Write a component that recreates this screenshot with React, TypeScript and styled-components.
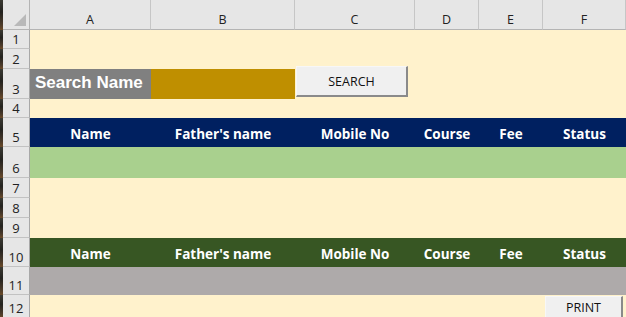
import React from "react";
import styled, { createGlobalStyle } from "styled-components";

const COLS = "3px 27px 121px 144px 120px 64px 64px 83px";

const Global = createGlobalStyle`
  html, body { margin: 0; padding: 0; background: #fff2cc; }
  body { width: 626px; height: 317px; overflow: hidden; }
`;

const Sheet = styled.div`
  width: 626px;
  height: 317px;
  overflow: hidden;
  display: flex;
  flex-direction: column;
  background: #fff2cc;
  font-family: "Open Sans", "Liberation Sans", sans-serif;
`;

const Row = styled.div<{ $h: number }>`
  display: grid;
  grid-template-columns: ${COLS};
  height: ${(p) => p.$h}px;
  flex: none;
  position: relative;
`;

const Strip = styled.div`
  background: linear-gradient(180deg, #3b3a33 0%, #24231f 40%, #4a3a2a 80%, #6b4a28 100%);
`;

const Corner = styled.div`
  background: #e6e6e6;
  border-right: 1px solid #b4b4b4;
  border-bottom: 1px solid #b4b4b4;
  display: flex;
  align-items: flex-end;
  justify-content: flex-end;
  padding: 0 3px 3px 0;
`;

const Triangle = styled.div`
  width: 0;
  height: 0;
  border-left: 12px solid transparent;
  border-bottom: 12px solid #b9b9b9;
`;

const ColHead = styled.div`
  background: #e6e6e6;
  border-right: 1px solid #c6c6c6;
  border-bottom: 1px solid #b4b4b4;
  display: flex;
  align-items: center;
  justify-content: center;
  padding-top: 9px;
  font-size: 12.5px;
  color: #222;
`;

const RowHead = styled.div`
  background: #e6e6e6;
  border-right: 1px solid #a8a8a8;
  border-bottom: 1px solid #c2c2c2;
  display: flex;
  align-items: flex-end;
  justify-content: center;
  font-size: 13px;
  line-height: 14px;
  padding-bottom: 2px;
  color: #222;
`;

const Cell = styled.div<{ $bg?: string; $span?: number }>`
  background: ${(p) => p.$bg ?? "#fff2cc"};
  grid-column: span ${(p) => p.$span ?? 1};
`;

const HeadCell = styled.div<{ $bg: string }>`
  background: ${(p) => p.$bg};
  display: flex;
  align-items: center;
  justify-content: center;
  padding-top: 3px;
  color: #fff;
  font-weight: 700;
  font-size: 13.5px;
  white-space: nowrap;
`;

const SearchLabel = styled.div`
  background: #808080;
  color: #fff;
  font-family: "Liberation Sans", Arial, sans-serif;
  font-weight: 700;
  font-size: 17px;
  display: flex;
  align-items: center;
  padding: 0 0 2px 5px;
  white-space: nowrap;
`;

const SearchInput = styled.div`
  background: #bf8f00;
`;

const ShapeButton = styled.div<{ $left: number; $top: number; $w: number; $h: number }>`
  position: absolute;
  left: ${(p) => p.$left}px;
  top: ${(p) => p.$top}px;
  width: ${(p) => p.$w}px;
  height: ${(p) => p.$h}px;
  box-sizing: border-box;
  background: #f0f0f0;
  border-top: 1px solid #f7f7f7;
  border-left: 1px solid #f7f7f7;
  border-right: 2px solid #8a8a8a;
  border-bottom: 2px solid #8a8a8a;
  display: flex;
  align-items: center;
  justify-content: center;
  font-size: 12.5px;
  color: #111;
`;

type RowDef = {
  n: number;
  h: number;
  kind?: "blank" | "fill" | "head" | "search" | "print";
  bg?: string;
};

const ROWS: RowDef[] = [
  { n: 1, h: 19 },
  { n: 2, h: 20 },
  { n: 3, h: 30, kind: "search" },
  { n: 4, h: 19 },
  { n: 5, h: 29, kind: "head", bg: "#002060" },
  { n: 6, h: 31, kind: "fill", bg: "#a9d08e" },
  { n: 7, h: 20 },
  { n: 8, h: 20 },
  { n: 9, h: 20 },
  { n: 10, h: 29, kind: "head", bg: "#375623" },
  { n: 11, h: 28, kind: "fill", bg: "#aeaaaa" },
  { n: 12, h: 23, kind: "print" },
];

const LETTERS = ["A", "B", "C", "D", "E", "F"];
const HEADINGS = ["Name", "Father's name", "Mobile No", "Course", "Fee", "Status"];

function RowBody({ r }: { r: RowDef }) {
  switch (r.kind) {
    case "head":
      return (
        <>
          {HEADINGS.map((t) => (
            <HeadCell key={t} $bg={r.bg!}>
              {t}
            </HeadCell>
          ))}
        </>
      );
    case "fill":
      return <Cell $bg={r.bg} $span={6} />;
    case "search":
      return (
        <>
          <SearchLabel>Search Name</SearchLabel>
          <SearchInput />
          <Cell $span={4} />
          <ShapeButton $left={296} $top={-3} $w={112} $h={31}>
            SEARCH
          </ShapeButton>
        </>
      );
    case "print":
      return (
        <>
          <Cell $span={6} />
          <ShapeButton $left={545} $top={1} $w={78} $h={23}>
            PRINT
          </ShapeButton>
        </>
      );
    default:
      return <Cell $span={6} />;
  }
}

export default function App() {
  return (
    <>
      <Global />
      <Sheet>
        <Row $h={30}>
          <Strip />
          <Corner>
            <Triangle />
          </Corner>
          {LETTERS.map((l) => (
            <ColHead key={l}>{l}</ColHead>
          ))}
        </Row>
        {ROWS.map((r) => (
          <Row key={r.n} $h={r.h}>
            <Strip />
            <RowHead>{r.n}</RowHead>
            <RowBody r={r} />
          </Row>
        ))}
      </Sheet>
    </>
  );
}
